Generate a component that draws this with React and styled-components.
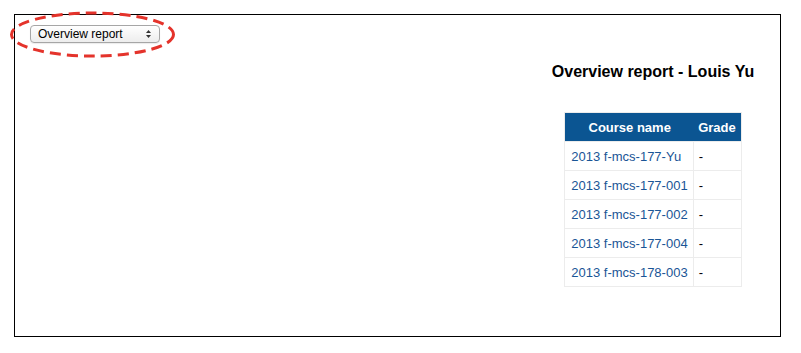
import React from 'react'
import styled, { createGlobalStyle } from 'styled-components'

const courses = [
  { name: '2013 f-mcs-177-Yu', grade: '-' },
  { name: '2013 f-mcs-177-001', grade: '-' },
  { name: '2013 f-mcs-177-002', grade: '-' },
  { name: '2013 f-mcs-177-004', grade: '-' },
  { name: '2013 f-mcs-178-003', grade: '-' },
];

export default function App() {
  return (
    <>
      <GlobalStyle />
      <Frame>
        <SelectWrap>
          <FakeSelect>
            <span>Overview report</span>
            <Arrows width="7" height="10" viewBox="0 0 7 10">
              <path d="M3.5 1 L6 4 L1 4 Z" fill="#333" />
              <path d="M3.5 9 L6 6 L1 6 Z" fill="#333" />
            </Arrows>
          </FakeSelect>
          <Highlight width="169" height="49" viewBox="0 0 169 49">
            <ellipse
              cx="84.5"
              cy="24.5"
              rx="81"
              ry="21.5"
              fill="none"
              stroke="#e4332b"
              strokeWidth="3"
              strokeDasharray="11 6"
            />
          </Highlight>
        </SelectWrap>
        <Report>
          <Title>Overview report - Louis Yu</Title>
          <Table>
            <thead>
              <tr>
                <Th $wide>Course name</Th>
                <Th>Grade</Th>
              </tr>
            </thead>
            <tbody>
              {courses.map((c) => (
                <tr key={c.name}>
                  <Td $wide><CourseLink href="#">{c.name}</CourseLink></Td>
                  <Td>{c.grade}</Td>
                </tr>
              ))}
            </tbody>
          </Table>
        </Report>
      </Frame>
    </>
  )
}

const GlobalStyle = createGlobalStyle`
  body {
    margin: 0;
    background: #fff;
    font-family: "Liberation Sans", Arial, sans-serif;
    color: #000;
  }
`;

const Frame = styled.div`
  margin: 14px 0 0 14px;
  width: 767px;
  height: 323px;
  box-sizing: border-box;
  border: 1px solid #000;
  padding: 10px 0 0 15px;
  display: flex;
  justify-content: space-between;
  align-items: flex-start;
`;

const SelectWrap = styled.div`
  position: relative;
`;

const FakeSelect = styled.div`
  width: 130px;
  height: 18px;
  box-sizing: border-box;
  border: 1px solid #a6a6a6;
  border-radius: 4px;
  background: linear-gradient(#ffffff, #ededed);
  box-shadow: 0 1px 1px rgba(0, 0, 0, 0.08);
  display: flex;
  align-items: center;
  justify-content: space-between;
  padding: 0 7px 0 7px;
  font-size: 12px;
  line-height: 16px;
  color: #000;
`;

const Arrows = styled.svg`
  display: block;
`;

const Highlight = styled.svg`
  position: absolute;
  left: -22px;
  top: -15px;
  pointer-events: none;
`;

const Report = styled.div`
  width: 254px;
  padding-top: 37px;
  display: flex;
  flex-direction: column;
  align-items: center;
`;

const Title = styled.h2`
  margin: 0 0 31px 0;
  font-size: 16px;
  font-weight: bold;
  line-height: 19px;
`;

const Table = styled.table`
  border-collapse: collapse;
  font-size: 13px;
  border: 1px solid #ececec;
`;

const Th = styled.th`
  background: #0b5592;
  color: #fff;
  font-weight: bold;
  text-align: center;
  height: 28px;
  padding: ${(p) => (p.$wide ? '0 5px 0 6px' : '0 5px')};
  border: none;
`;

const Td = styled.td`
  height: 28px;
  padding: ${(p) => (p.$wide ? '0 5px 0 6px' : '0 5px')};
  border: 1px solid #ececec;
  text-align: left;
`;

const CourseLink = styled.a`
  color: #1a5596;
  text-decoration: none;
`;
